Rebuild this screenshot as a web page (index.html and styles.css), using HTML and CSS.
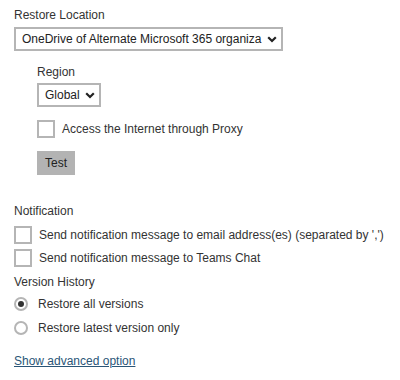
FILE: index.html
```html
<!DOCTYPE html>
<html>
<head>
<meta charset="utf-8">
<link rel="stylesheet" href="styles.css">
</head>
<body>
<div class="page">
  <div class="label first">Restore Location</div>
  <div class="select wide">
    <span class="select-text">OneDrive of Alternate Microsoft 365 organiza</span>
    <svg class="chev" width="10" height="7" viewBox="0 0 10 7"><path d="M1.2 1.2 L5 5 L8.8 1.2" fill="none" stroke="#222" stroke-width="2.2"/></svg>
  </div>
  <div class="sub">
    <div class="label region">Region</div>
    <div class="select small">
      <span class="select-text">Global</span>
      <svg class="chev" width="10" height="7" viewBox="0 0 10 7"><path d="M1.2 1.2 L5 5 L8.8 1.2" fill="none" stroke="#222" stroke-width="2.2"/></svg>
    </div>
    <div class="check-row proxy"><span class="box"></span><span>Access the Internet through Proxy</span></div>
    <div class="btn">Test</div>
  </div>
  <div class="label notif">Notification</div>
  <div class="check-row n1"><span class="box"></span><span>Send notification message to email address(es) (separated by ',')</span></div>
  <div class="check-row n2"><span class="box"></span><span>Send notification message to Teams Chat</span></div>
  <div class="label vh">Version History</div>
  <div class="radio-row r1"><span class="radio checked"></span><span>Restore all versions</span></div>
  <div class="radio-row r2"><span class="radio"></span><span>Restore latest version only</span></div>
  <a class="link" href="#">Show advanced option</a>
</div>
</body>
</html>
```
FILE: styles.css
```css
html, body { margin: 0; padding: 0; background: #fff; }
.page {
  font-family: "Liberation Sans", Arial, sans-serif;
  font-size: 12px;
  color: #333;
  padding: 8px 0 0 14px;
  display: flex;
  flex-direction: column;
  align-items: flex-start;
}
.label { line-height: 14px; height: 14px; }
.select {
  box-sizing: border-box;
  height: 24px;
  border: 2px solid #b5b5b5;
  display: flex;
  align-items: center;
  justify-content: space-between;
  background: #fff;
  color: #222;
}
.wide { width: 269px; margin-top: 5px; padding: 0 4px 0 6px; }
.small { width: 64px; margin-top: 4px; padding: 0 4px 0 6px; }
.chev { display: block; }
.sub {
  margin-left: 23px;
  display: flex;
  flex-direction: column;
  align-items: flex-start;
}
.region { margin-top: 14px; }
.check-row, .radio-row {
  display: flex;
  align-items: center;
  height: 18px;
  line-height: 14px;
}
.box {
  box-sizing: border-box;
  width: 18px;
  height: 18px;
  border: 2px solid #b5b5b5;
  background: #fff;
  margin-right: 7px;
}
.proxy { margin-top: 13px; }
.btn {
  margin-top: 13px;
  box-sizing: border-box;
  height: 24px;
  width: 38px;
  background: #b3b3b3;
  color: #222;
  display: flex;
  align-items: center;
  justify-content: center;
}
.notif { margin-top: 29px; }
.n1 { margin-top: 8px; }
.n2 { margin-top: 5px; }
.vh { margin-top: 8px; }
.r1 { margin-top: 6px; }
.r2 { margin-top: 6px; }
.radio {
  box-sizing: border-box;
  width: 14px;
  height: 14px;
  border: 2px solid #b5b5b5;
  border-radius: 50%;
  margin-right: 10px;
  display: flex;
  align-items: center;
  justify-content: center;
}
.radio.checked::after {
  content: "";
  width: 6px;
  height: 6px;
  border-radius: 50%;
  background: #333;
}
.link {
  margin-top: 17px;
  line-height: 14px;
  color: #2a5577;
  text-decoration: underline;
}
```
